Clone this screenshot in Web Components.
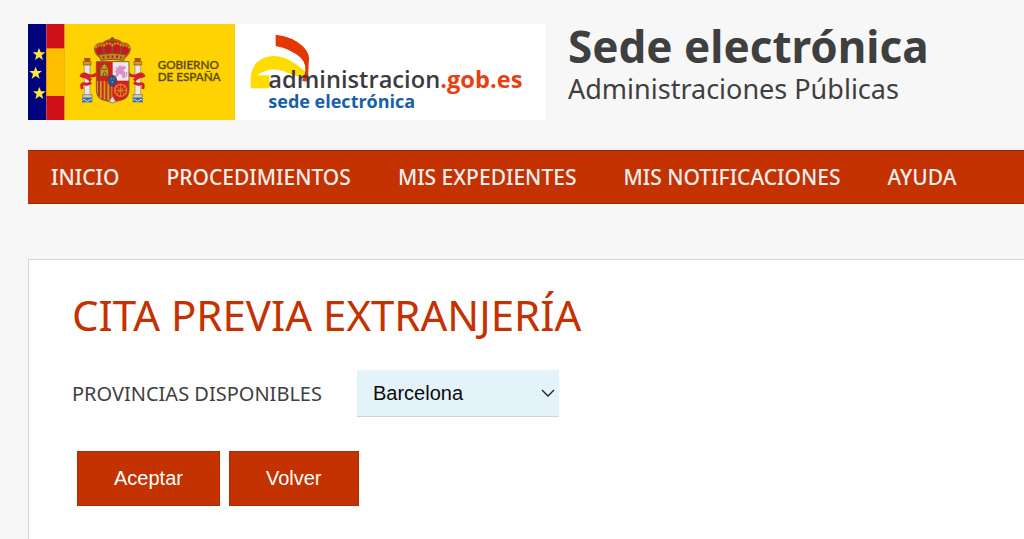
<!DOCTYPE html>
<html lang="es">
<head>
<meta charset="utf-8">
<meta name="viewport" content="width=device-width, initial-scale=1">
<title>Sede electrónica - Administraciones Públicas</title>
<style>
  html { height: 100%; }
  body { margin: 0; min-height: 100%; display: flex; background: #f7f7f7; color: #3f3f3f; font-family: "Noto Sans", "Open Sans", sans-serif; }
</style>
</head>
<body>
<sede-page>
  <sede-header slot="header">
    <sede-logo slot="logo"></sede-logo>
    <span slot="title">Sede electrónica</span>
    <span slot="subtitle">Administraciones Públicas</span>
  </sede-header>
  <sede-nav slot="nav">
    <sede-nav-item href="#inicio">INICIO</sede-nav-item>
    <sede-nav-item href="#procedimientos">PROCEDIMIENTOS</sede-nav-item>
    <sede-nav-item href="#expedientes">MIS EXPEDIENTES</sede-nav-item>
    <sede-nav-item href="#notificaciones">MIS NOTIFICACIONES</sede-nav-item>
    <sede-nav-item href="#ayuda">AYUDA</sede-nav-item>
  </sede-nav>
  <cita-form>CITA PREVIA EXTRANJERÍA</cita-form>
</sede-page>

<template id="page">
  <style>
    :host { display: flex; flex: 1; flex-direction: column; min-width: 0; padding: 24px 0 0 28px; box-sizing: border-box; }
    main { flex: 1; display: flex; margin-top: 55px; }
    ::slotted(cita-form) { flex: 1; }
  </style>
  <slot name="header"></slot>
  <slot name="nav"></slot>
  <main><slot></slot></main>
</template>

<template id="header">
  <style>
    :host { display: block; }
    header { display: flex; gap: 22px; align-items: flex-start; margin-bottom: 30px; }
    h1, p { margin: 0; white-space: nowrap; }
    h1 { font-size: 44px; line-height: 44px; font-weight: 700; }
    p { font-size: 27px; line-height: 42px; }
  </style>
  <header>
    <slot name="logo"></slot>
    <div><h1><slot name="title"></slot></h1><p><slot name="subtitle"></slot></p></div>
  </header>
</template>

<template id="logo">
  <style>
    :host { display: block; flex: none; width: 518px; }
    svg { display: block; width: 100%; height: auto; }
    .gob { font: 500 35px Lato, sans-serif; fill: #5d4b08; stroke: #5d4b08; stroke-width: 1; }
    .adm { font: 600 71px "Open Sans", sans-serif; fill: #3c3c40; }
    .dom { fill: #e84010; font-weight: 700; }
    .sede { font: 700 54px "Open Sans", sans-serif; fill: #175fa9; }
  </style>
  <svg viewBox="24 24 1554 288" role="img" aria-label="Gobierno de España, administracion.gob.es">
    <defs>
      <path id="star" d="M0-19 5-6 19-6 8 3 12 17 0 9-12 17-8 3-19-6-5-6Z" fill="#ffe83c"/>
      <g id="pillar">
        <path d="M192 126h20l-3 12h-14z" fill="#b44a13"/>
        <path d="M190 136h23v11h-23z" fill="#d99a18" stroke="#79521c" stroke-width="2"/>
        <path d="M193 148h17v90h-17z" fill="#e9e8e5" stroke="#8e8c86" stroke-width="2"/>
        <path d="M188 236h28v9h-28z" fill="#c8cbd0" stroke="#756e58" stroke-width="2"/>
        <path d="M186 246h31v13h-31z" fill="#2d71a8"/>
        <path d="M187 253q5-6 10 0t10 0 9 0" fill="none" stroke="#dce9f0" stroke-width="3"/>
        <path d="M231 173q-14 12-28 4-17-8-20 6M184 181q15-1 29 13M213 199q-7 8-18 5-15-4-8 15" fill="none" stroke="#d32222" stroke-width="9"/>
      </g>
    </defs>
    <path d="M24 24h1554v288H24z" fill="#fff"/>
    <path d="M24 24h55v288H24z" fill="#00047c"/>
    <path d="M79 24h55v288H79z" fill="#ce1118"/>
    <path d="M79 97h55v143H79z" fill="#ffbe00"/>
    <path d="M134 24h511v288H134z" fill="#ffd204"/>
    <use href="#star" x="57" y="115"/><use href="#star" x="47" y="171"/><use href="#star" x="58" y="232"/>
    <use href="#pillar"/>
    <use href="#pillar" transform="translate(555 0) scale(-1 1)"/>
    <path d="M237 122q-14-13-13-25 4-16 25-15 12-13 28-9 17-5 29 9 21-1 24 15 1 12-13 25-40 7-80 0z" fill="#c71720" stroke="#9b6616" stroke-width="5"/>
    <path d="M277 63v55M270 70h14M251 84q-4 19 5 35M303 84q4 19-5 35" fill="none" stroke="#7b551a" stroke-width="6"/>
    <path d="M226 96q8-11 25-7 14-13 26-1 13-12 28 1 16-4 23 7" fill="none" stroke="#d3941b" stroke-width="7" stroke-dasharray="6 3"/>
    <path d="M236 116q41-9 82 0l-7 17q-34-6-68 0z" fill="#c8861b" stroke="#81501a" stroke-width="3"/>
    <path d="M248 124h5m9-2h6m7 0h5m8 0h6m7 2h4" stroke="#ad1d26" stroke-width="7"/>
    <path d="M229 137h98v84q0 23-18 30l-32 8-31-8q-17-7-17-30z" fill="#d91c20"/>
    <path d="M278 137h49v57h-49z" fill="#eceaf0"/>
    <path d="M230 195h47v62l-31-7q-16-8-16-30z" fill="#d29b1b"/>
    <path d="M237 195v46m11-46v56m11-56v59m12-59v60" stroke="#c3321c" stroke-width="6"/>
    <path d="M240 181v-26h5v-8h5v-5h6v5h5v8h5v26z" fill="#c79b22" stroke="#6e501c" stroke-width="3"/>
    <path d="M250 181v-10q4-6 8 0v10M244 160h18" fill="none" stroke="#6e501c" stroke-width="3"/>
    <path d="m286 153 8 2 5-8 8 5 8-3 2 8-7 6 7 7-4 17-8-2 2-8-10-3-6 10-8-2 7-11-6-4 6-6z" fill="#dc91c4"/>
    <path d="M315 183q8-5 4-15" fill="none" stroke="#dc91c4" stroke-width="4"/>
    <circle cx="302" cy="223" r="18" fill="none" stroke="#d58c20" stroke-width="4"/>
    <path d="M302 203v40m-20-20h40m-34-14 28 28m0-28-28 28" stroke="#d58c20" stroke-width="3"/>
    <path d="M229 137h98v84q0 23-18 30l-32 8-31-8q-17-7-17-30z" fill="none" stroke="#806025" stroke-width="3"/>
    <path d="m267 257 10-17 11 17-11 4z" fill="#e4dcca" stroke="#8a6846" stroke-width="2"/>
    <ellipse cx="277" cy="194" rx="13" ry="16" fill="#2054a0" stroke="#8e2440" stroke-width="3"/>
    <path d="M272 188h3m5 0h3m-8 10h4" stroke="#b89f47" stroke-width="4"/>
    <text class="gob" x="413" y="158">GOBIERNO</text>
    <text class="gob" x="413" y="195">DE ESPAÑA</text>
    <path d="M692 217v-34q4-42 40-58 44-16 92 17 17 12 43 35-11 8-20 6-27-2-54-17-45-16-81 12h36v39z" fill="#ffdc00"/>
    <path d="M767 56q53 6 83 36 23 24 16 51l-2 52q-7 3-18-1 22-43-4-69-29-26-75-35z" fill="#e33600"/>
    <text class="adm" x="745" y="216">administracion<tspan class="dom">.gob.es</tspan></text>
    <text class="sede" x="745" y="277">sede electrónica</text>
  </svg>
</template>

<template id="nav">
  <style>
    :host { display: block; }
    nav { display: flex; gap: 47px; padding: 0 23px; background: #c33200; border: solid #982900; border-width: 1px 0; }
  </style>
  <nav aria-label="Principal"><slot></slot></nav>
</template>

<template id="nav-item">
  <style>
    :host { display: block; }
    a { display: block; color: #f3eeee; font-size: 21px; font-weight: 500; line-height: 52px; text-decoration: none; white-space: nowrap; }
  </style>
  <a><slot></slot></a>
</template>

<template id="form">
  <style>
    :host { display: block; background: #fefefe; border: solid #d4d6d8; border-width: 1px 0 0 1px; padding: 28px 43px 33px; box-sizing: border-box; }
    h2 { margin: 0; color: #c33200; font-size: 42px; line-height: 54px; font-weight: 400; }
    .field { display: flex; align-items: center; gap: 35px; margin-top: 28px; }
    label { font-size: 20px; line-height: 46px; white-space: nowrap; }
    .picker { display: grid; width: 202px; }
    select, svg { grid-area: 1 / 1; }
    select { appearance: none; width: 100%; height: 47px; margin: 0; padding: 0 32px 0 16px; border: 0; border-bottom: 1px solid #cfd4d8; border-radius: 0; background: #e4f3f9; color: #0c0c0c; font: 20px "Liberation Sans", Arial, sans-serif; }
    svg { width: 14px; height: 9px; align-self: center; justify-self: end; margin-right: 4px; pointer-events: none; }
    .actions { display: flex; gap: 9px; margin: 34px 0 0 5px; }
  </style>
  <h2><slot></slot></h2>
  <form>
    <div class="field">
      <label for="province">PROVINCIAS DISPONIBLES</label>
      <div class="picker">
        <select id="province"><option>Barcelona</option></select>
        <svg viewBox="0 0 14 9" aria-hidden="true"><path d="m1 1 6 6 6-6" fill="none" stroke="#222" stroke-width="1.4"/></svg>
      </div>
    </div>
    <div class="actions"><sede-button>Aceptar</sede-button><sede-button>Volver</sede-button></div>
  </form>
</template>

<template id="button">
  <style>
    :host { display: block; }
    button { display: block; height: 55px; margin: 0; padding: 0 36px; border: 1px solid #a92e05; border-radius: 0; background: #c33200; color: #fff; font: 20px "Liberation Sans", Arial, sans-serif; }
  </style>
  <button type="button"><slot></slot></button>
</template>

<script>
  class SedeElement extends HTMLElement {
    constructor() {
      super();
      const template = document.getElementById(this.constructor.template);
      this.attachShadow({ mode: "open" }).append(template.content.cloneNode(true));
    }
  }
  class SedePage extends SedeElement { static template = "page"; }
  class SedeHeader extends SedeElement { static template = "header"; }
  class SedeLogo extends SedeElement { static template = "logo"; }
  class SedeNav extends SedeElement { static template = "nav"; }
  class SedeNavItem extends SedeElement {
    static template = "nav-item";
    connectedCallback() { this.shadowRoot.querySelector("a").href = this.getAttribute("href"); }
  }
  class SedeButton extends SedeElement { static template = "button"; }
  class CitaForm extends SedeElement { static template = "form"; }
  customElements.define("sede-button", SedeButton);
  customElements.define("sede-logo", SedeLogo);
  customElements.define("sede-header", SedeHeader);
  customElements.define("sede-nav-item", SedeNavItem);
  customElements.define("sede-nav", SedeNav);
  customElements.define("cita-form", CitaForm);
  customElements.define("sede-page", SedePage);
</script>
</body>
</html>
